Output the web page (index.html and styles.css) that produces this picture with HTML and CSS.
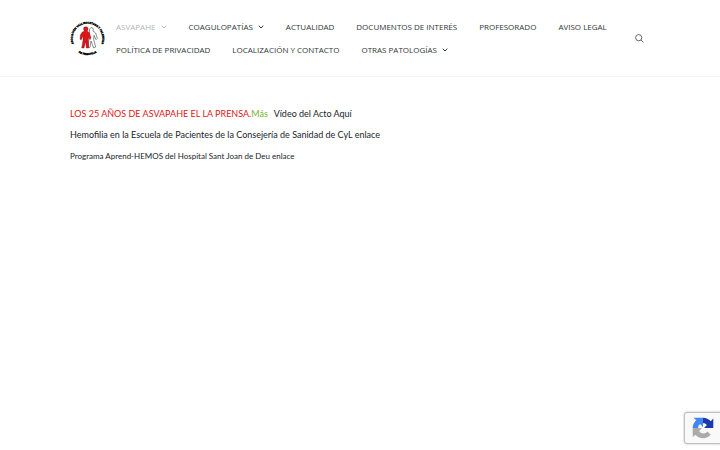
FILE: index.html
```html
<!DOCTYPE html>
<html lang="es">
<head>
<meta charset="utf-8">
<meta name="viewport" content="width=device-width, initial-scale=1">
<title>ASVAPAHE</title>
<link rel="stylesheet" href="styles.css">
</head>
<body>
<header class="site-header">
  <div class="container header-inner">
    <a class="logo" href="#" aria-label="ASVAPAHE">
      <svg viewBox="0 0 105 105">
        <defs>
          <path id="arc-top" d="M31 91.400 A44.500 44.500 0 1 1 74 91.400"/>
          <path id="arc-bottom" d="M12 82 A50.500 50.500 0 0 0 93 82"/>
        </defs>
        <text class="logo-text"><textPath href="#arc-top" startOffset="50%">ASOCIACIÓN VALLISOLETANA Y PALENTINA</textPath></text>
        <text class="logo-text"><textPath href="#arc-bottom" startOffset="50%">DE HEMOFILIA</textPath></text>
        <path d="M59 24 Q62 18 67 20 Q72 24 69 30 L77 36 L82 52 L78 56 L72 43 L71 55 L77 78 L71 81 L63 60 L60 79 L55 79 L57 48 Z" fill="#fff" stroke="#555" stroke-width="2"/>
        <path d="M43 30 Q38 22 43 18 Q50 15 54 21 Q55 27 52 31 L58 35 L63 50 L60 56 L55 47 L55 58 L56 81 L49 81 L47 62 L42 81 L35 81 L39 58 L39 44 L34 56 L30 55 L31 42 L36 34 Z" fill="#df1518" stroke="#5b1010"/>
      </svg>
    </a>
    <nav class="menu" aria-label="Principal">
      <a class="current" href="#">ASVAPAHE<svg class="chevron" viewBox="0 0 6 4"><path d="M.7.7 3 3 5.300.7"/></svg></a>
      <a href="#">COAGULOPATÍAS<svg class="chevron" viewBox="0 0 6 4"><path d="M.7.7 3 3 5.300.7"/></svg></a>
      <a href="#">ACTUALIDAD</a>
      <a href="#">DOCUMENTOS DE INTERÉS</a>
      <a href="#">PROFESORADO</a>
      <a href="#">AVISO LEGAL</a>
      <a href="#">POLÍTICA DE PRIVACIDAD</a>
      <a href="#">LOCALIZACIÓN Y CONTACTO</a>
      <a href="#">OTRAS PATOLOGÍAS<svg class="chevron" viewBox="0 0 6 4"><path d="M.7.7 3 3 5.300.7"/></svg></a>
    </nav>
    <button class="search" type="button" aria-label="Buscar">
      <svg viewBox="0 0 9 9"><circle cx="3.700" cy="3.700" r="3.100"/><path d="M6 6 8.500 8.500"/></svg>
    </button>
  </div>
</header>
<main class="container content">
  <p><span class="headline">LOS 25 AÑOS DE ASVAPAHE EL LA PRENSA.</span><a class="more" href="#">Más</a><a class="video" href="#">Vídeo del Acto Aquí</a></p>
  <p>Hemofilia en la Escuela de Pacientes de la Consejería de Sanidad de CyL <a href="#">enlace</a></p>
  <p class="small">Programa Aprend-HEMOS del Hospital Sant Joan de Deu <a href="#">enlace</a></p>
</main>
<aside class="captcha" aria-label="reCAPTCHA">
  <svg viewBox="0 0 64 64">
    <path fill="#1c3aa9" d="M62 31.900V4.700L54.500 12.200A30 30 0 0 0 31.500 2V17.500A15 15 0 0 1 43.500 23.200L35 31.900Z"/>
    <path fill="#4285f4" d="M32 2H4.800L12.300 9.500A30 30 0 0 0 2 32H17.500A15 15 0 0 1 23.300 20.500L32 29Z"/>
    <path fill="#ababab" d="M2 32V59.200L9.500 51.700A30 30 0 0 0 54.500 51.700L45 42.300A15 15 0 0 1 20.500 40.500L29 32Z"/>
  </svg>
</aside>
</body>
</html>
```
FILE: styles.css
```css
* {
  box-sizing: border-box;
}

body {
  margin: 0;
  background: #fff;
  color: #17242a;
  font-family: Lato, sans-serif;
  font-size: 9px;
}

a {
  color: inherit;
  text-decoration: none;
}

.container {
  max-width: 620px;
  margin: 0 auto;
  padding: 0 20px;
}

.site-header {
  border-bottom: 1px solid #f3f3f3;
}

.header-inner {
  display: flex;
  align-items: center;
  padding-top: 15px;
  padding-bottom: 15px;
}

.logo {
  flex: none;
  width: 35px;
  height: 35px;
}

.logo svg {
  display: block;
}

.logo-text {
  font: bold 8px "Liberation Sans Narrow", "Liberation Sans", sans-serif;
  text-anchor: middle;
  stroke: #000;
}

.menu {
  flex: 1;
  display: flex;
  flex-wrap: wrap;
  column-gap: 22px;
  margin-left: 11px;
  color: #303638;
  font: 8px/23px "Open Sans", sans-serif;
}

.menu a {
  white-space: nowrap;
}

.menu .current {
  color: #b4b6b7;
}

.chevron {
  width: 6px;
  height: 4px;
  margin-left: 5px;
  vertical-align: 1px;
  fill: none;
  stroke: currentColor;
}

.search {
  flex: none;
  width: 9px;
  height: 9px;
  margin-right: 6px;
  padding: 0;
  border: 0;
  background: none;
}

.search svg {
  display: block;
  fill: none;
  stroke: #62686b;
}

.content {
  padding-top: 26px;
}

.content p {
  margin: 0;
  line-height: 21px;
}

.content .small {
  font-size: 8px;
  line-height: 23px;
}

.headline {
  color: #dd1717;
}

.more {
  color: #76b32d;
}

.video {
  margin-left: 6px;
}

.captcha {
  position: fixed;
  right: 0;
  bottom: 7px;
  width: 35px;
  height: 30px;
  padding: 4px 6px 4px 7px;
  border-radius: 2px 0 0 2px;
  background: #f9f9f9;
  box-shadow: 0 0 2px 1px #aaa;
}

.captcha svg {
  display: block;
  width: 22px;
  height: 22px;
}
```
